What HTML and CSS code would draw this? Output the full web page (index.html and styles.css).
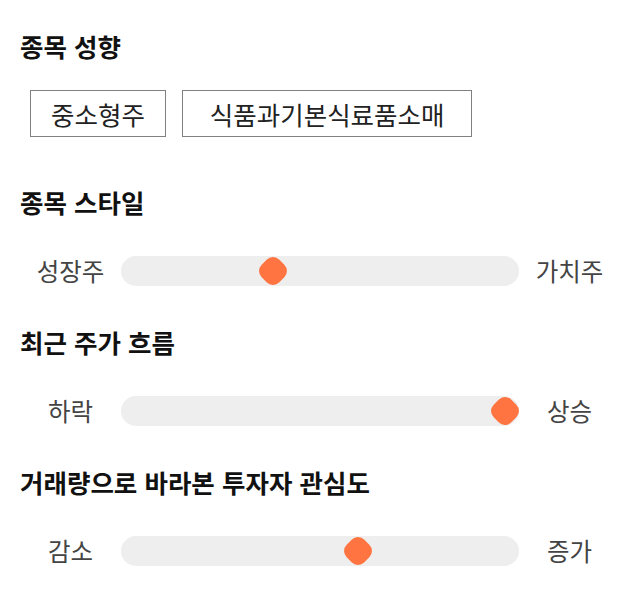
FILE: index.html
```html
<!DOCTYPE html>
<html lang="ko">
<head>
<meta charset="utf-8">
<link rel="stylesheet" href="styles.css">
</head>
<body>
<main class="page">
  <section class="sec sec-first">
    <h2 class="title">종목 성향</h2>
    <div class="tags">
      <span class="tag">중소형주</span>
      <span class="tag tag-wide">식품과기본식료품소매</span>
    </div>
  </section>
  <section class="sec">
    <h2 class="title">종목 스타일</h2>
    <div class="slider">
      <span class="lbl">성장주</span>
      <div class="track"><span class="thumb" style="left:38.3%"></span></div>
      <span class="lbl">가치주</span>
    </div>
  </section>
  <section class="sec">
    <h2 class="title">최근 주가 흐름</h2>
    <div class="slider">
      <span class="lbl">하락</span>
      <div class="track"><span class="thumb" style="left:96.5%"></span></div>
      <span class="lbl">상승</span>
    </div>
  </section>
  <section class="sec">
    <h2 class="title">거래량으로 바라본 투자자 관심도</h2>
    <div class="slider">
      <span class="lbl">감소</span>
      <div class="track"><span class="thumb" style="left:59.5%"></span></div>
      <span class="lbl">증가</span>
    </div>
  </section>
</main>
</body>
</html>
```
FILE: styles.css
```css
* { box-sizing: border-box; }
html, body { margin: 0; padding: 0; background: #fff; }
body {
  font-family: "Noto Sans CJK KR", "Noto Sans", sans-serif;
  color: #111;
}
.page {
  width: 640px;
  padding: 30px 20px 0 20px;
}
.sec { margin-top: 40px; }
.sec-first { margin-top: 0; margin-bottom: 49px; }
.sec-first + .sec { margin-top: 0; }
.title {
  margin: 0;
  font-size: 25.5px;
  font-weight: 700;
  line-height: 32px;
  color: #111;
}
.tags {
  display: flex;
  gap: 16px;
  margin-top: 28px;
  padding-left: 10px;
}
.tag {
  display: flex;
  align-items: center;
  justify-content: center;
  height: 47px;
  padding: 0 20px;
  border: 1px solid #808080;
  font-size: 25.5px;
  color: #222;
}
.tag-wide { padding: 0 27px; }
.slider {
  display: flex;
  align-items: center;
  margin-top: 38px;
  height: 30px;
}
.lbl {
  width: 101px;
  flex: none;
  text-align: center;
  font-size: 24.5px;
  color: #444;
  line-height: 30px;
}
.track {
  position: relative;
  width: 398px;
  height: 30px;
  flex: none;
  background: #eeeeee;
  border-radius: 15px;
}
.thumb {
  position: absolute;
  top: 50%;
  width: 25px;
  height: 25px;
  background: #ff7440;
  border-radius: 9px;
  transform: translate(-50%, -50%) rotate(45deg);
}
```
